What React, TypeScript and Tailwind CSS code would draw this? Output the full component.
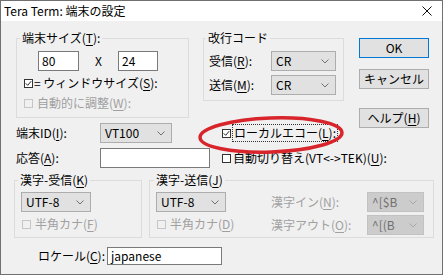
import React from "react";

const Chevron = ({ disabled }: { disabled?: boolean }) => (
  <svg width="8" height="5" viewBox="0 0 8 5" className="shrink-0">
    <polyline
      points="0.5,0.5 4,4 7.5,0.5"
      fill="none"
      stroke={disabled ? "#a8a8a8" : "#707070"}
      strokeWidth="1"
    />
  </svg>
);

function Select({ value, w, disabled }: { value: string; w: string; disabled?: boolean }) {
  return (
    <div
      className={`${w} h-[20px] shrink-0 flex items-center justify-between pl-[4px] pr-[6px] border ${
        disabled ? "bg-[#cccccc] border-[#c2c2c2] text-[#707070]" : "bg-[#e1e1e1] border-[#adadad] text-black"
      }`}
    >
      <span>{value}</span>
      <Chevron disabled={disabled} />
    </div>
  );
}

function Input({ value, w, h }: { value?: string; w: string; h: string }) {
  return (
    <div className={`${w} ${h} shrink-0 bg-white border border-[#7a7a7a] flex items-center pl-[3px]`}>
      {value}
    </div>
  );
}

function Check({ checked, disabled }: { checked?: boolean; disabled?: boolean }) {
  return (
    <span
      className={`w-[9px] h-[9px] shrink-0 border flex items-center justify-center ${
        disabled ? "border-[#c6c6c6] bg-[#f0f0f0]" : "border-[#333333] bg-white"
      }`}
    >
      {checked && (
        <svg width="7" height="7" viewBox="0 0 7 7">
          <polyline points="0.8,3.4 2.7,5.3 6.2,1.2" fill="none" stroke="#222" strokeWidth="1" />
        </svg>
      )}
    </span>
  );
}

const U = ({ children }: { children: React.ReactNode }) => (
  <span className="underline underline-offset-[2px] decoration-[1px]">{children}</span>
);

function Button({ children, primary, mt }: { children: React.ReactNode; primary?: boolean; mt: string }) {
  return (
    <div
      className={`${mt} w-[70px] h-[20px] flex items-center justify-center bg-[#e1e1e1] border ${
        primary ? "border-[#0078d7]" : "border-[#adadad]"
      }`}
    >
      {children}
    </div>
  );
}

export default function App() {
  return (
    <div className="w-[443px] h-[275px] bg-[#f0f0f0] border border-[#707070] flex flex-col relative overflow-hidden text-[12px] leading-[16px] text-black font-['Noto_Sans_CJK_JP',sans-serif] whitespace-nowrap">
      {/* Title bar */}
      <div className="h-[20px] bg-white flex items-center justify-between pl-[3px] pr-[10px] shrink-0">
        <span className="text-[12px]">Tera Term: 端末の設定</span>
        <svg width="10" height="10" viewBox="0 0 10 10">
          <path d="M0.5 0.5 L9.5 9.5 M9.5 0.5 L0.5 9.5" stroke="#111" strokeWidth="1" />
        </svg>
      </div>

      {/* Top */}
      <div className="mt-[9px] flex items-start">
        <div className="ml-[15px] w-[329px] flex flex-col shrink-0">
          <div className="flex items-start">
            {/* 端末サイズ */}
            <fieldset className="w-[173px] h-[88px] border border-[#dcdcdc] shrink-0">
              <legend className="ml-[3px] px-[2px]">
                端末サイズ(<U>T</U>):
              </legend>
              <div className="mt-[5px] ml-[21px] flex items-center">
                <Input value="80" w="w-[41px]" h="h-[20px]" />
                <span className="w-[39px] text-center">X</span>
                <Input value="24" w="w-[40px]" h="h-[20px]" />
              </div>
              <div className="mt-[2px] ml-[7px] h-[20px] flex items-center">
                <Check checked />
                <span className="ml-[1px]">= ウィンドウサイズ(<U>S</U>):</span>
              </div>
              <div className="ml-[7px] h-[20px] flex items-center text-[#a0a0a0]">
                <Check disabled />
                <span className="ml-[4px]">自動的に調整(<U>W</U>):</span>
              </div>
            </fieldset>

            {/* 改行コード */}
            <fieldset className="ml-[14px] w-[141px] h-[71px] border border-[#dcdcdc] shrink-0">
              <legend className="ml-[2px] px-[2px]">改行コード</legend>
              <div className="mt-[5px] ml-[5px] flex items-center">
                <span className="w-[62px]">
                  受信(<U>R</U>):
                </span>
                <Select value="CR" w="w-[65px]" />
              </div>
              <div className="mt-[4px] ml-[5px] flex items-center">
                <span className="w-[62px]">
                  送信(<U>M</U>):
                </span>
                <Select value="CR" w="w-[65px]" />
              </div>
            </fieldset>
          </div>

          {/* 端末ID */}
          <div className="mt-[5px] h-[20px] flex items-center">
            <span className="w-[84px] shrink-0">
              端末ID(<U>I</U>):
            </span>
            <Select value="VT100" w="w-[72px]" />
            <div className="ml-[50px] flex items-center">
              <Check checked />
              <span className="ml-[1px] px-[1px] border border-dotted border-[#333]">
                ローカルエコー(<U>L</U>):
              </span>
            </div>
          </div>

          {/* 応答 */}
          <div className="mt-[5px] h-[20px] flex items-center">
            <span className="w-[84px] shrink-0">
              応答(<U>A</U>):
            </span>
            <Input w="w-[110px]" h="h-[20px]" />
            <div className="ml-[12px] flex items-center">
              <Check />
              <span className="ml-[2px]">
                自動切り替え(VT&lt;-&gt;TEK)(<U>U</U>):
              </span>
            </div>
          </div>
        </div>

        {/* Buttons */}
        <div className="ml-[14px] pt-[8px] flex flex-col">
          <Button primary mt="mt-0">OK</Button>
          <Button mt="mt-[11px]">キャンセル</Button>
          <Button mt="mt-[19px]">
            ヘルプ(<U>H</U>)
          </Button>
        </div>
      </div>

      {/* Kanji */}
      <div className="mt-[4px] ml-[13px] flex items-start">
        <fieldset className="w-[128px] h-[66px] border border-[#dcdcdc] shrink-0">
          <legend className="ml-[3px] px-[2px]">
            漢字-受信(<U>K</U>)
          </legend>
          <div className="mt-[4px] ml-[6px]">
            <Select value="UTF-8" w="w-[70px]" />
          </div>
          <div className="mt-[2px] ml-[7px] h-[20px] flex items-center text-[#a0a0a0]">
            <Check disabled />
            <span className="ml-[4px]">
              半角カナ(<U>F</U>)
            </span>
          </div>
        </fieldset>

        <fieldset className="ml-[7px] w-[285px] h-[66px] border border-[#dcdcdc] shrink-0">
          <legend className="ml-[4px] px-[2px]">
            漢字-送信(<U>J</U>)
          </legend>
          <div className="flex items-start">
            <div className="ml-[6px] w-[70px] flex flex-col">
              <div className="mt-[4px]">
                <Select value="UTF-8" w="w-[70px]" />
              </div>
              <div className="mt-[2px] ml-[1px] h-[20px] flex items-center text-[#a0a0a0]">
                <Check disabled />
                <span className="ml-[4px]">
                  半角カナ(<U>D</U>)
                </span>
              </div>
            </div>
            <div className="ml-[45px] flex flex-col">
              <div className="mt-[4px] flex items-center">
                <span className="w-[96px] text-[#a0a0a0]">
                  漢字イン(<U>N</U>):
                </span>
                <Select value="^[$B" w="w-[57px]" disabled />
              </div>
              <div className="mt-[3px] flex items-center">
                <span className="w-[96px] text-[#a0a0a0]">
                  漢字アウト(<U>O</U>):
                </span>
                <Select value="^[(B" w="w-[57px]" disabled />
              </div>
            </div>
          </div>
        </fieldset>
      </div>

      {/* Locale */}
      <div className="mt-[9px] ml-[13px] h-[18px] flex items-center">
        <span className="w-[91px] text-right">
          ロケール(<U>C</U>):
        </span>
        <div className="ml-[2px]">
          <Input value="japanese" w="w-[115px]" h="h-[18px]" />
        </div>
      </div>

      {/* Red annotation ellipse */}
      <svg
        className="absolute left-[195px] top-[112px] pointer-events-none"
        width="152"
        height="44"
        viewBox="0 0 152 44"
      >
        <ellipse
          cx="75"
          cy="22"
          rx="71"
          ry="17"
          fill="none"
          stroke="#d8242b"
          strokeWidth="3.5"
          transform="rotate(-2 75 22)"
        />
      </svg>
    </div>
  );
}
